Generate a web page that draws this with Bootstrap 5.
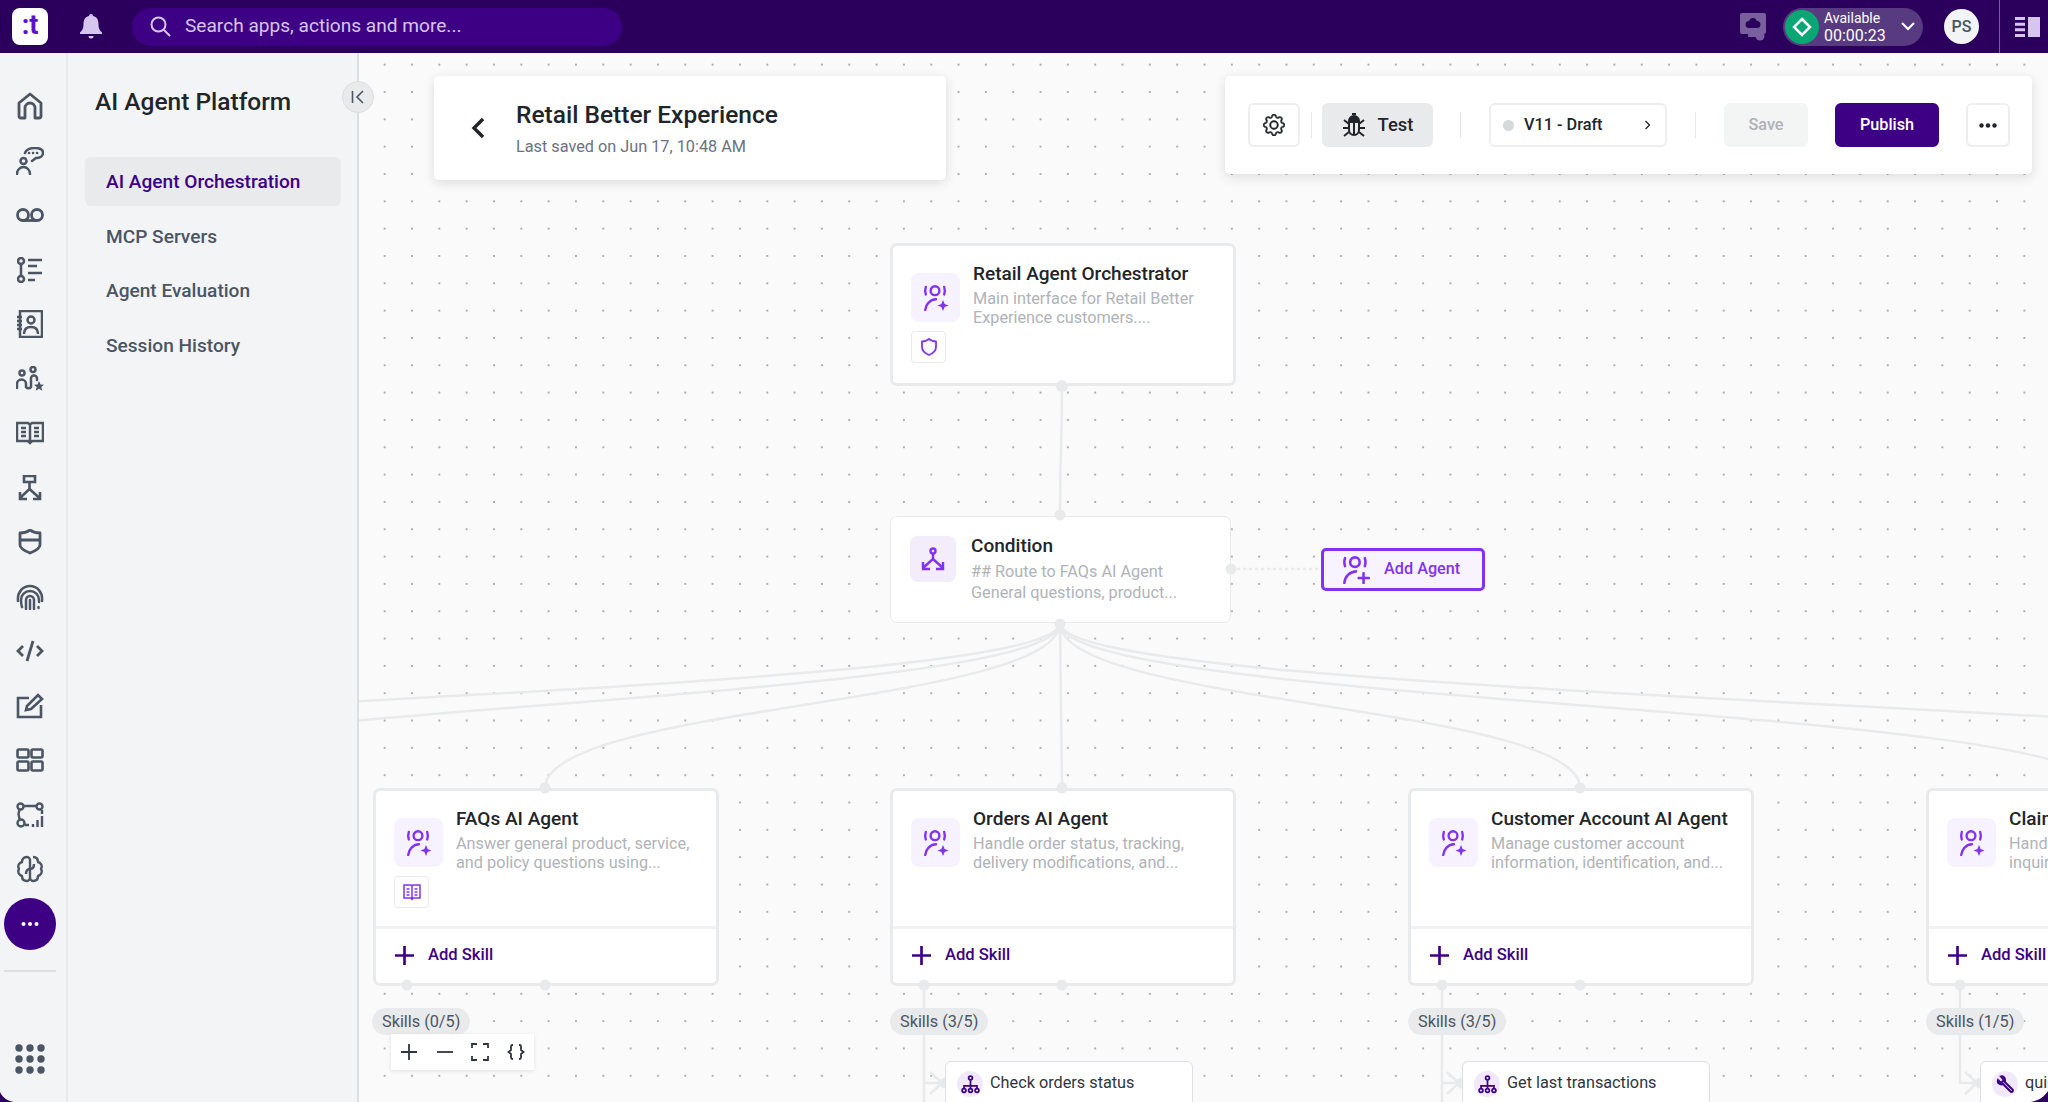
<!DOCTYPE html>
<html lang="en">
<head>
  <meta charset="UTF-8">
  <title>AI Agent Platform</title>
  <link href="https://cdn.jsdelivr.net/npm/bootstrap@5.3.0/dist/css/bootstrap.min.css" rel="stylesheet">
  <style>
    body { font-family: Roboto, "Liberation Sans", sans-serif; background: #fafafa; color: #212529; }
    .app-shell { height: 1102px; width: 2048px; position: relative; }

    /* top bar */
    .app-top { height: 53px; background: #2b005c; flex: none; padding-left: 12px; }
    .app-logo { width: 36px; height: 37px; background: #fff; border-radius: 8px; color: #5a10cc; font: 700 27px/35px Roboto, sans-serif; text-align: center; }
    .app-bell { margin-left: 32px; color: #d6c6ee; }
    .app-search { margin-left: 30px; width: 490px; height: 38px; background: #3d0085; border-radius: 19px; color: #d6c6ee; font-size: 19.1px; padding-left: 18px; gap: 14px; }
    .app-monitor { margin-left: auto; margin-right: 16px; color: #7a5f9e; }
    .app-status { width: 140px; height: 38px; border-radius: 19px; background: #583a80; color: #fff; padding-left: 2px; }
    .app-status-dot { width: 34px; height: 34px; border-radius: 50%; background: #0aa774; }
    .app-status-text { margin-left: 5px; line-height: 17px; }
    .app-status-label { font-size: 14px; }
    .app-status-time { font-size: 16px; }
    .app-avatar { width: 35px; height: 35px; border-radius: 50%; background: #f3f4f6; color: #4b5563; font-size: 16px; font-weight: 500; margin-left: 21px; }
    .app-topline { width: 1px; height: 53px; background: #7a5f9e; margin-left: 20px; }
    .app-panelbtn { margin-left: 15px; margin-right: 8px; }

    /* left rail and panel */
    .app-rail { width: 68px; flex: none; background: #f3f4f6; border-right: 2px solid #e9eaec; color: #4b5563; padding: 26px 6px 0 0; }
    .rail-item { height: 54.5px; width: 100%; flex: none; }
    .rail-more { width: 52px; height: 52px; border-radius: 50%; background: #3d0085; margin-top: 1px; flex: none; }
    .rail-rule { width: 52px; height: 2px; background: #dcdee1; margin-top: 20px; flex: none; }
    .rail-apps { margin-top: 72px; flex: none; }
    .app-panel { width: 291px; flex: none; background: #f3f4f6; border-right: 2px solid #dcdee1; padding: 33px 16px 0 17px; position: relative; }
    .panel-title { font-size: 24.5px; font-weight: 500; line-height: 32px; margin: 0 0 39px 10px; white-space: nowrap; }
    .panel-link { display: block; height: 49px; line-height: 49px; margin-bottom: 5.5px; padding-left: 21px; border-radius: 6px; font-size: 19.1px; font-weight: 500; color: #4b5563; text-decoration: none; }
    .panel-link.is-on { background: #e9eaec; color: #3d0085; }
    .panel-toggle { position: absolute; right: -17px; top: 28px; width: 32px; height: 32px; border-radius: 50%; background: #e9eaec; border: 1px solid #dcdee1; color: #4b5563; z-index: 5; }

    /* canvas */
    .app-canvas { flex: 1; background-color: #fafafa; background-image: radial-gradient(circle, #555 .5px, transparent .85px); background-size: 27.33px 27.33px; background-position: 12px -2px; }
    .flow-layer { position: absolute; left: -359px; top: -53px; width: 2700px; height: 1200px; }
    .flow-edges { position: absolute; left: 0; top: 0; }
    .flow-edge { fill: none; stroke: #e9eaec; stroke-width: 2.5; }
    .flow-grip { fill: #e9eaec; }

    .flow-card { position: absolute; background: #fff; border: 3px solid #e9eaec; border-radius: 7px; width: 346px; }
    .card-top { top: 243px; left: 890px; height: 143px; }
    .card-cond { top: 516px; left: 890px; width: 341px; height: 107px; border-width: 1px; }
    .card-faq { left: 373px; }
    .card-orders { left: 890px; }
    .card-account { left: 1408px; }
    .card-claims { left: 1926px; }
    .card-agent { top: 788px; height: 198px; }
    .card-body-row { height: 138px; padding: 27px 18px 0; gap: 13px; border-bottom: 3px solid #f1f2f3; }
    .card-top .card-body-row { border: 0; }
    .card-cond .card-body-row { border: 0; padding: 19px 19px 0; gap: 15px; height: auto; }
    .agent-tile { width: 49px; height: 49px; border-radius: 8px; background: #f6f2ff; color: #8133f1; flex: none; }
    .cond-tile { width: 46px; height: 46px; border-radius: 8px; background: #f2ecfb; color: #8133f1; flex: none; }
    .agent-badge { width: 35px; height: 32px; margin-top: 9px; border: 1px solid #e9eaec; border-radius: 4px; color: #8133f1; }
    .agent-name { font-size: 19.05px; font-weight: 500; line-height: 22px; margin-top: -10px; white-space: nowrap; }
    .agent-note { font-size: 16.25px; line-height: 19px; color: #b0b3b8; margin-top: 4px; white-space: nowrap; }
    .card-cond .agent-name { margin-top: -1px; }
    .card-cond .agent-note { line-height: 21px; margin-top: 4px; }
    .add-skill { height: 53px; padding-left: 19px; gap: 14px; color: #3d0085; font-size: 16.6px; font-weight: 500; }

    .add-agent { position: absolute; left: 1321px; top: 548px; width: 164px; height: 43px; background: #f8f4ff; border: 3px solid #8133f1; border-radius: 5px; color: #8133f1; font-size: 16.25px; font-weight: 500; padding-left: 18px; gap: 14px; }
    .skill-pill { position: absolute; top: 1008px; height: 27px; line-height: 27px; padding: 0 10px; background: #e9eaec; border-radius: 14px; color: #4b5563; font-size: 16.25px; white-space: nowrap; }
    .pill-faq { left: 372px; }
    .pill-orders { left: 890px; }
    .pill-account { left: 1408px; }
    .pill-claims { left: 1926px; }
    .skill-box { position: absolute; top: 1061px; height: 60px; width: 248px; background: #fff; border: 1px solid #dcdfe3; border-radius: 6px; padding: 9px 11px; gap: 7px; font-size: 16.25px; color: #2f3540; white-space: nowrap; }
    .box-orders { left: 945px; }
    .box-account { left: 1462px; }
    .box-claims { left: 1980px; }
    .skill-icon { width: 26px; height: 26px; border-radius: 50%; background: #f1e9fb; color: #3d0085; flex: none; }
    .zoom-bar { position: absolute; left: 391px; top: 1034px; width: 143px; height: 36px; background: #fff; box-shadow: 0 1px 4px rgba(0,0,0,.1); color: #2f3540; z-index: 4; padding: 0 8px; justify-content: space-between; }

    /* floating header cards */
    .float-card { position: absolute; top: 76px; background: #fff; border-radius: 5px; box-shadow: 0 3px 12px rgba(0,0,0,.12); z-index: 6; }
    .head-card { left: 434px; width: 512px; height: 104px; }
    .head-back { margin-left: 37px; margin-right: 31px; color: #212529; }
    .head-title { font-size: 24.5px; font-weight: 500; line-height: 30px; }
    .head-sub { font-size: 16.25px; line-height: 20px; color: #6b7280; margin-top: 7px; }
    .tool-card { left: 1225px; width: 807px; height: 98px; padding-left: 23px; }
    .tool-btn { height: 44px; border: 2px solid #eceef0; border-radius: 6px; background: #fff; font-size: 16.25px; font-weight: 500; color: #212529; flex: none; }
    .tool-gear { width: 52px; }
    .tool-test { width: 111px; background: #e9eaec; border-color: #e9eaec; font-size: 18.4px; gap: 12px; }
    .tool-version { width: 178px; padding: 0 14px 0 12px; }
    .tool-dot { width: 11px; height: 11px; border-radius: 50%; background: #d5d8dc; margin-right: 10px; }
    .tool-save { width: 84px; background: #f3f4f4; border-color: #f3f4f4; color: #aeb1b6; }
    .tool-publish { width: 104px; background: #3d0085; border-color: #3d0085; color: #fff; }
    .tool-more { width: 44px; }
    .tool-rule { width: 1px; height: 26px; background: #e6e7e9; flex: none; }
    .gap-a { margin: 0 10px 0 11px; }
    .gap-b { margin: 0 28px 0 27px; }
    .gap-b2 { margin: 0 28px; }
    .gap-c { margin-left: 27px; }
    .gap-d { margin-left: 27px; }

    .win-corner { position: absolute; bottom: 0; z-index: 9; }
    .corner-left { left: 0; }
    .corner-right { right: 0; }
    .sprite { position: absolute; width: 0; height: 0; }
  </style>
</head>
<body>

<svg class="sprite" aria-hidden="true">
  <symbol id="ic-agent" viewBox="0 0 26 26" fill="none" stroke="currentColor" stroke-width="2.4" stroke-linecap="round">
    <circle cx="12" cy="5.7" r="4.4"/>
    <path d="M2.8 2Q1.6 5.7 2.8 9.4M21.2 2Q22.4 5.7 21.2 9.4"/>
    <path d="M2.2 25C2.7 19 7 14.7 13 14.3"/>
    <path d="M20 15l1.6 3.9 3.9 1.6-3.9 1.6-1.6 3.9-1.6-3.9-3.9-1.6 3.9-1.6z" fill="currentColor" stroke="none"/>
  </symbol>
  <symbol id="ic-plus" viewBox="0 0 20 20" fill="none" stroke="currentColor" stroke-width="2.8">
    <path d="M10 0v20M0 10h20"/>
  </symbol>
  <symbol id="ic-tree" viewBox="0 0 22 22" fill="none" stroke="currentColor" stroke-width="2">
    <circle cx="11" cy="3.5" r="2.2"/>
    <circle cx="3.5" cy="18" r="2.2"/>
    <circle cx="11" cy="18" r="2.2"/>
    <circle cx="18.5" cy="18" r="2.2"/>
    <path d="M11 6v10M3.5 16v-3.5h15V16"/>
  </symbol>
</svg>

<div class="app-shell d-flex flex-column overflow-hidden">

  <header class="app-top d-flex align-items-center">
    <div class="app-logo">:t</div>
    <svg class="app-bell" width="22" height="25" viewBox="0 0 22 25" fill="currentColor"><path d="M11 0a2 2 0 0 1 2 2c4 .9 5.5 4 5.5 8 0 4.5 1.3 6.5 3.5 8.5V20H0v-1.5C2.2 16.5 3.5 14.5 3.5 10c0-4 1.5-7.100 5.500-8a2 2 0 0 1 2-2z"/><path d="M8.5 22h5a2.5 2.5 0 0 1-5 0z"/></svg>
    <div class="app-search d-flex align-items-center">
      <svg width="21" height="21" viewBox="0 0 21 21" fill="none" stroke="currentColor" stroke-width="2"><circle cx="8.5" cy="8.5" r="7"/><path d="M13.5 13.5L20 20"/></svg>
      <span>Search apps, actions and more...</span>
    </div>
    <svg class="app-monitor" width="28" height="28" viewBox="0 0 28 28" fill="currentColor"><path d="M3 0h22a2 2 0 0 1 2 2v17a2 2 0 0 1-2 2h-2.500a5 5 0 0 0-5 0H3a2 2 0 0 1-2-2V2a2 2 0 0 1 2-2z"/><path d="M9 21h8v3H9z"/><circle cx="21" cy="23" r="4.5"/><path d="M14 5a4 4 0 0 1 3.800 3A3.500 3.500 0 0 1 18 15H10a3.500 3.500 0 0 1 .2-7A4 4 0 0 1 14 5z" fill="#2b005c"/></svg>
    <div class="app-status d-flex align-items-center">
      <div class="app-status-dot d-flex align-items-center justify-content-center">
        <svg width="20" height="20" viewBox="0 0 20 20" fill="none" stroke="#fff" stroke-width="2.5"><path d="M10 2l8 8-8 8-8-8z"/></svg>
      </div>
      <div class="app-status-text">
        <div class="app-status-label">Available</div>
        <div class="app-status-time">00:00:23</div>
      </div>
      <svg class="ms-auto me-2" width="14" height="9" viewBox="0 0 14 9" fill="none" stroke="#fff" stroke-width="2"><path d="M1 1l6 6 6-6"/></svg>
    </div>
    <div class="app-avatar d-flex align-items-center justify-content-center">PS</div>
    <div class="app-topline"></div>
    <svg class="app-panelbtn" width="25" height="20" viewBox="0 0 25 20" fill="#d6c6ee"><path d="M0 0h10v3H0zM0 5.7h10v3H0zM0 11.3h10v3H0zM0 17h10v3H0zM13 0h12v20H13z"/></svg>
  </header>

  <div class="d-flex flex-grow-1 overflow-hidden">
    <nav class="app-rail d-flex flex-column align-items-center">
      <!-- home -->
      <div class="rail-item d-flex align-items-center justify-content-center"><svg width="26" height="28" viewBox="0 0 26 28" fill="none" stroke="currentColor" stroke-width="2.8" stroke-linejoin="round"><path d="M13 2L2 11v13a2 2 0 0 0 2 2h4V16a5 5 0 0 1 10 0v10h4a2 2 0 0 0 2-2V11z"/></svg></div>
      <!-- agent chat -->
      <div class="rail-item d-flex align-items-center justify-content-center"><svg width="28" height="28" viewBox="0 0 28 28" fill="none" stroke="currentColor" stroke-width="2.5" stroke-linecap="round"><circle cx="7.5" cy="14" r="3"/><path d="M1 27c0-4 3-7 6.500-7s6.500 3 6.500 7"/><path d="M9 6c1-3 5-5 10-5 5 0 8 2 8 5s-3 5-7 5l-4 3"/><path d="M13 6h.1M17 6h.1M21 6h.1"/></svg></div>
      <!-- voicemail -->
      <div class="rail-item d-flex align-items-center justify-content-center"><svg width="28" height="16" viewBox="0 0 28 16" fill="none" stroke="currentColor" stroke-width="2.8"><circle cx="7" cy="8" r="5.5"/><circle cx="21" cy="8" r="5.5"/><path d="M7 13.5h14"/></svg></div>
      <!-- steps -->
      <div class="rail-item d-flex align-items-center justify-content-center"><svg width="26" height="26" viewBox="0 0 26 26" fill="none" stroke="currentColor" stroke-width="2.5"><circle cx="4" cy="4" r="3"/><circle cx="4" cy="22" r="3"/><path d="M4 7v12M11 3h14M11 9h9M11 16h14M11 23h7"/></svg></div>
      <!-- contacts -->
      <div class="rail-item d-flex align-items-center justify-content-center"><svg width="26" height="28" viewBox="0 0 26 28" fill="none" stroke="currentColor" stroke-width="2.5"><path d="M3 1h22v26H3z"/><path d="M0 7h5M0 11h5M0 15h5M0 19h5"/><circle cx="14" cy="10" r="3.5"/><path d="M7 24c0-5 3-7 7-7s7 2 7 7"/></svg></div>
      <!-- people star -->
      <div class="rail-item d-flex align-items-center justify-content-center"><svg width="28" height="26" viewBox="0 0 28 26" fill="none" stroke="currentColor" stroke-width="2.5" stroke-linecap="round"><circle cx="6" cy="7" r="2.5"/><circle cx="17" cy="3.5" r="2.5"/><path d="M1 22v-4a4.500 4.500 0 0 1 9 0v3a3 3 0 0 0 5 0V13a3 3 0 0 1 6-1v2"/><path d="M23 15l1.500 3.500 3.500.3-2.700 2.300.9 3.600-3.200-2-3.200 2 .9-3.600-2.700-2.300 3.500-.3z" fill="currentColor" stroke="none"/></svg></div>
      <!-- book -->
      <div class="rail-item d-flex align-items-center justify-content-center"><svg width="28" height="24" viewBox="0 0 28 24" fill="none" stroke="currentColor" stroke-width="2.5"><path d="M1 2h11l2 1.500L16 2h11v18H16l-2 2-2-2H1zM14 3.500V20"/><path d="M5 7h5M5 11h5M5 15h5M18 7h5M18 11h5M18 15h5"/></svg></div>
      <!-- flow -->
      <div class="rail-item d-flex align-items-center justify-content-center"><svg width="26" height="26" viewBox="0 0 26 26" fill="none" stroke="currentColor" stroke-width="2.6"><path d="M7 1h11v6H7zM12.500 7v7L3 23M12.500 14l10 9M3 17v7h7M23 17v7h-7"/></svg></div>
      <!-- shield -->
      <div class="rail-item d-flex align-items-center justify-content-center"><svg width="24" height="26" viewBox="0 0 24 26" fill="none" stroke="currentColor" stroke-width="2.8" stroke-linejoin="round"><path d="M2 4c4 0 7-1 10-3 3 2 6 3 10 3v12c0 3-5 6-10 8-5-2-10-5-10-8zM2 11h20"/></svg></div>
      <!-- fingerprint -->
      <div class="rail-item d-flex align-items-center justify-content-center"><svg width="28" height="26" viewBox="0 0 28 26" fill="none" stroke="currentColor" stroke-width="2.5" stroke-linecap="round"><path d="M2 17C1 8 7 2 14 2s13 6 12 15M6 23c-1-3-1-5-1-7 0-5 4-9 9-9s9 4 9 9v2M10 25v-9a4 4 0 0 1 8 0v9M14 16v9M22.500 23v1"/></svg></div>
      <!-- code -->
      <div class="rail-item d-flex align-items-center justify-content-center"><svg width="28" height="22" viewBox="0 0 28 22" fill="none" stroke="currentColor" stroke-width="2.8"><path d="M7 6l-5 5 5 5M21 6l5 5-5 5M17 1l-6 20"/></svg></div>
      <!-- edit -->
      <div class="rail-item d-flex align-items-center justify-content-center"><svg width="28" height="26" viewBox="0 0 28 26" fill="none" stroke="currentColor" stroke-width="2.6"><path d="M13 5H2v19h23V12"/><path d="M10 17l1-4L22 2l4 4-11 10z"/></svg></div>
      <!-- grid -->
      <div class="rail-item d-flex align-items-center justify-content-center"><svg width="28" height="24" viewBox="0 0 28 24" fill="none" stroke="currentColor" stroke-width="2.6"><rect x="1.5" y="1.5" width="11" height="8" rx="1.5"/><rect x="15.5" y="1.5" width="11" height="8" rx="1.5"/><rect x="1.5" y="13.5" width="11" height="9" rx="1.5"/><rect x="15.5" y="13.5" width="11" height="9" rx="1.5"/></svg></div>
      <!-- analytics -->
      <div class="rail-item d-flex align-items-center justify-content-center"><svg width="28" height="26" viewBox="0 0 28 26" fill="none" stroke="currentColor" stroke-width="2.4"><circle cx="4.5" cy="4.5" r="3"/><circle cx="23.5" cy="4.5" r="3"/><circle cx="5" cy="21" r="3.5"/><path d="M7.500 4h13M3.500 7.500L2.500 12l1 5M26 8v4M9 23h4"/><path d="M17 22v3M21.500 18v7M26 14v11"/></svg></div>
      <!-- brain -->
      <div class="rail-item d-flex align-items-center justify-content-center"><svg width="28" height="28" viewBox="0 0 28 28" fill="none" stroke="currentColor" stroke-width="2.4" stroke-linejoin="round"><path d="M11 2C7 2 6 5 6 7c-3 1-5 4-3 7-2 3 0 6 3 7 0 3 2 5 5 5 2 0 3-2 3-3V5c0-1-1-3-3-3z"/><path d="M17 2c4 0 5 3 5 5 3 1 5 4 3 7 2 3 0 6-3 7 0 3-2 5-5 5-2 0-3-2-3-3"/><path d="M14 14c3 0 4-2 4-5M14 14c-3 0-4 2-4 5"/></svg></div>
      <div class="rail-more d-flex align-items-center justify-content-center"><svg width="18" height="4" viewBox="0 0 18 4" fill="#fff"><circle cx="2.5" cy="2" r="2"/><circle cx="9" cy="2" r="2"/><circle cx="15.5" cy="2" r="2"/></svg></div>
      <div class="rail-rule"></div>
      <svg class="rail-apps" width="30" height="30" viewBox="0 0 30 30" fill="#4b5563"><circle cx="4" cy="4" r="3.7"/><circle cx="15" cy="4" r="3.7"/><circle cx="26" cy="4" r="3.7"/><circle cx="4" cy="15" r="3.7"/><circle cx="15" cy="15" r="3.7"/><circle cx="26" cy="15" r="3.7"/><circle cx="4" cy="26" r="3.7"/><circle cx="15" cy="26" r="3.7"/><circle cx="26" cy="26" r="3.7"/></svg>
    </nav>

    <aside class="app-panel">
      <div class="panel-title">AI Agent Platform</div>
      <a class="panel-link is-on" href="#">AI Agent Orchestration</a>
      <a class="panel-link" href="#">MCP Servers</a>
      <a class="panel-link" href="#">Agent Evaluation</a>
      <a class="panel-link" href="#">Session History</a>
      <div class="panel-toggle d-flex align-items-center justify-content-center">
        <svg width="14" height="14" viewBox="0 0 14 14" fill="none" stroke="currentColor" stroke-width="1.6"><path d="M1.5 1v12M12 1L6 7l6 6"/></svg>
      </div>
    </aside>

    <main class="app-canvas position-relative overflow-hidden">
      <div class="flow-layer">

        <svg class="flow-edges" width="2700" height="1200">
          <path class="flow-edge" d="M1062 386C1062 450 1060 450 1060 516"/>
          <path class="flow-edge" stroke-dasharray="3 3" d="M1231 569H1321"/>
          <path class="flow-edge" d="M1060 623C1060 705 -491 705 -491 788"/>
          <path class="flow-edge" d="M1060 623C1060 705 27 705 27 788"/>
          <path class="flow-edge" d="M1060 623C1060 705 545 705 545 788"/>
          <path class="flow-edge" d="M1060 623L1062 788"/>
          <path class="flow-edge" d="M1060 623C1060 705 1580 705 1580 788"/>
          <path class="flow-edge" d="M1060 623C1060 705 2098 705 2098 788"/>
          <path class="flow-edge" d="M1060 623C1060 705 2617 705 2617 788"/>
          <path class="flow-edge" d="M924 986V1102M924 1083H942M930 1072L942 1083L930 1094"/>
          <path class="flow-edge" d="M1442 986V1102M1442 1083H1459M1447 1072L1459 1083L1447 1094"/>
          <path class="flow-edge" d="M1960 986V1083H1977M1965 1072L1977 1083L1965 1094"/>
        </svg>

        <div class="flow-card card-top">
          <div class="card-body-row d-flex">
            <div>
              <div class="agent-tile d-flex align-items-center justify-content-center"><svg width="26" height="26"><use href="#ic-agent"/></svg></div>
              <div class="agent-badge d-flex align-items-center justify-content-center"><svg width="16" height="18" viewBox="0 0 16 18" fill="none" stroke="currentColor" stroke-width="1.8" stroke-linejoin="round"><path d="M1 3.5C4 3.5 6 2.5 8 1c2 1.5 4 2.5 7 2.5V9c0 4-3.5 6.5-7 8-3.500-1.500-7-4-7-8z"/></svg></div>
            </div>
            <div>
              <div class="agent-name">Retail Agent Orchestrator</div>
              <div class="agent-note">Main interface for Retail Better<br>Experience customers....</div>
            </div>
          </div>
        </div>

        <div class="flow-card card-cond">
          <div class="card-body-row d-flex">
            <div class="cond-tile d-flex align-items-center justify-content-center">
              <svg width="24" height="24" viewBox="0 0 24 24" fill="none" stroke="currentColor" stroke-width="2.4"><circle cx="12" cy="4" r="2.5"/><path d="M12 7v5L2 21M12 12l10 9M2 15v7h7M22 15v7h-7"/></svg>
            </div>
            <div>
              <div class="agent-name">Condition</div>
              <div class="agent-note">## Route to FAQs AI Agent<br>General questions, product...</div>
            </div>
          </div>
        </div>

        <div class="add-agent d-flex align-items-center">
          <svg width="28" height="28" viewBox="0 0 26 26" fill="none" stroke="currentColor" stroke-width="2.4" stroke-linecap="round"><circle cx="12" cy="5.7" r="4.4"/><path d="M2.8 2Q1.6 5.7 2.8 9.4M21.2 2Q22.4 5.7 21.2 9.4M2.2 25C2.7 19 7 14.7 13 14.3M20 16v9M15.5 20.5h9.5"/></svg>
          <span>Add Agent</span>
        </div>

        <div class="flow-card card-agent card-faq">
          <div class="card-body-row d-flex">
            <div>
              <div class="agent-tile d-flex align-items-center justify-content-center"><svg width="26" height="26"><use href="#ic-agent"/></svg></div>
              <div class="agent-badge d-flex align-items-center justify-content-center"><svg width="18" height="18" viewBox="0 0 18 18" fill="none" stroke="currentColor" stroke-width="1.5"><path d="M1 2h7l1 1 1-1h7v13h-7l-1 1.5L8 15H1zM9 3v12M3.5 6h3M3.5 9h3M3.5 12h3M11.5 6h3M11.5 9h3M11.5 12h3"/></svg></div>
            </div>
            <div>
              <div class="agent-name">FAQs AI Agent</div>
              <div class="agent-note">Answer general product, service,<br>and policy questions using...</div>
            </div>
          </div>
          <div class="add-skill d-flex align-items-center"><svg width="19" height="19"><use href="#ic-plus"/></svg><span>Add Skill</span></div>
        </div>

        <div class="flow-card card-agent card-orders">
          <div class="card-body-row d-flex">
            <div class="agent-tile d-flex align-items-center justify-content-center"><svg width="26" height="26"><use href="#ic-agent"/></svg></div>
            <div>
              <div class="agent-name">Orders AI Agent</div>
              <div class="agent-note">Handle order status, tracking,<br>delivery modifications, and...</div>
            </div>
          </div>
          <div class="add-skill d-flex align-items-center"><svg width="19" height="19"><use href="#ic-plus"/></svg><span>Add Skill</span></div>
        </div>

        <div class="flow-card card-agent card-account">
          <div class="card-body-row d-flex">
            <div class="agent-tile d-flex align-items-center justify-content-center"><svg width="26" height="26"><use href="#ic-agent"/></svg></div>
            <div>
              <div class="agent-name">Customer Account AI Agent</div>
              <div class="agent-note">Manage customer account<br>information, identification, and...</div>
            </div>
          </div>
          <div class="add-skill d-flex align-items-center"><svg width="19" height="19"><use href="#ic-plus"/></svg><span>Add Skill</span></div>
        </div>

        <div class="flow-card card-agent card-claims">
          <div class="card-body-row d-flex">
            <div class="agent-tile d-flex align-items-center justify-content-center"><svg width="26" height="26"><use href="#ic-agent"/></svg></div>
            <div>
              <div class="agent-name">Claims AI Agent</div>
              <div class="agent-note">Handle claims and return<br>inquiries, refunds, and...</div>
            </div>
          </div>
          <div class="add-skill d-flex align-items-center"><svg width="19" height="19"><use href="#ic-plus"/></svg><span>Add Skill</span></div>
        </div>

        <svg class="flow-edges" width="2700" height="1200">
          <circle class="flow-grip" cx="1062" cy="386" r="6"/>
          <circle class="flow-grip" cx="1060" cy="515" r="5.5"/>
          <circle class="flow-grip" cx="1231" cy="569" r="5.5"/>
          <circle class="flow-grip" cx="1060" cy="624" r="5.5"/>
          <circle class="flow-grip" cx="545" cy="788" r="5.5"/>
          <circle class="flow-grip" cx="1062" cy="788" r="5.5"/>
          <circle class="flow-grip" cx="1580" cy="788" r="5.5"/>
          <circle class="flow-grip" cx="407" cy="985" r="5.5"/>
          <circle class="flow-grip" cx="545" cy="985" r="5.5"/>
          <circle class="flow-grip" cx="924" cy="985" r="5.5"/>
          <circle class="flow-grip" cx="1062" cy="985" r="5.5"/>
          <circle class="flow-grip" cx="1442" cy="985" r="5.5"/>
          <circle class="flow-grip" cx="1580" cy="985" r="5.5"/>
          <circle class="flow-grip" cx="1960" cy="985" r="5.5"/>
          <circle class="flow-grip" cx="945" cy="1083" r="5.5"/>
          <circle class="flow-grip" cx="1462" cy="1083" r="5.5"/>
          <circle class="flow-grip" cx="1980" cy="1083" r="5.5"/>
        </svg>

        <div class="skill-pill pill-faq">Skills (0/5)</div>
        <div class="skill-pill pill-orders">Skills (3/5)</div>
        <div class="skill-pill pill-account">Skills (3/5)</div>
        <div class="skill-pill pill-claims">Skills (1/5)</div>

        <div class="skill-box box-orders d-flex">
          <div class="skill-icon d-flex align-items-center justify-content-center"><svg width="19" height="19"><use href="#ic-tree"/></svg></div>
          <span>Check orders status</span>
        </div>
        <div class="skill-box box-account d-flex">
          <div class="skill-icon d-flex align-items-center justify-content-center"><svg width="19" height="19"><use href="#ic-tree"/></svg></div>
          <span>Get last transactions</span>
        </div>
        <div class="skill-box box-claims d-flex">
          <div class="skill-icon d-flex align-items-center justify-content-center">
            <svg width="18" height="18" viewBox="0 0 18 18" fill="none" stroke="currentColor" stroke-width="2"><path d="M2 5l3 3 3-3-3-3.500C7 1 9 2 9 5c0 1 0 1.500-.2 2L16.500 14.500a1.400 1.400 0 0 1-2 2L7 9c-3 1.200-6-1-5-4z"/></svg>
          </div>
          <span>quick claim status</span>
        </div>

        <div class="zoom-bar d-flex align-items-center">
          <svg width="20" height="20" viewBox="0 0 20 20" fill="none" stroke="currentColor" stroke-width="1.8"><path d="M10 2v16M2 10h16"/></svg>
          <svg width="20" height="20" viewBox="0 0 20 20" fill="none" stroke="currentColor" stroke-width="1.8"><path d="M2 10h16"/></svg>
          <svg width="20" height="20" viewBox="0 0 20 20" fill="none" stroke="currentColor" stroke-width="1.8"><path d="M2 6V2h5M13 2h5v4M18 14v4h-5M7 18H2v-4"/></svg>
          <svg width="20" height="20" viewBox="0 0 20 20" fill="none" stroke="currentColor" stroke-width="1.8"><path d="M7 3H6.500A1.500 1.500 0 0 0 5 4.500V8l-2.500 2L5 12v3.500A1.500 1.500 0 0 0 6.500 17H7M13 3h.5A1.500 1.500 0 0 1 15 4.500V8l2.500 2-2.500 2v3.500a1.500 1.500 0 0 1-1.500 1.500H13"/></svg>
        </div>

        <div class="float-card head-card d-flex align-items-center">
          <svg class="head-back" width="14" height="22" viewBox="0 0 14 22" fill="none" stroke="currentColor" stroke-width="3.4"><path d="M12 2L3 11l9 9"/></svg>
          <div>
            <div class="head-title">Retail Better Experience</div>
            <div class="head-sub">Last saved on Jun 17, 10:48 AM</div>
          </div>
        </div>

        <div class="float-card tool-card d-flex align-items-center">
          <div class="tool-btn tool-gear d-flex align-items-center justify-content-center">
            <svg width="22" height="22" viewBox="0 0 16 16" fill="currentColor" stroke="currentColor" stroke-width=".35"><path d="M8 4.754a3.246 3.246 0 1 0 0 6.492 3.246 3.246 0 0 0 0-6.492zM5.754 8a2.246 2.246 0 1 1 4.492 0 2.246 2.246 0 0 1-4.492 0z"/><path d="M9.796 1.343c-.527-1.790-3.065-1.790-3.592 0l-.094.319a.873.873 0 0 1-1.255.52l-.292-.16c-1.640-.892-3.433.902-2.540 2.541l.159.292a.873.873 0 0 1-.52 1.255l-.319.094c-1.790.527-1.790 3.065 0 3.592l.319.094a.873.873 0 0 1 .52 1.255l-.16.292c-.892 1.640.901 3.434 2.541 2.540l.292-.159a.873.873 0 0 1 1.255.52l.094.319c.527 1.790 3.065 1.790 3.592 0l.094-.319a.873.873 0 0 1 1.255-.52l.292.16c1.640.893 3.434-.902 2.540-2.541l-.159-.292a.873.873 0 0 1 .52-1.255l.319-.094c1.790-.527 1.790-3.065 0-3.592l-.319-.094a.873.873 0 0 1-.52-1.255l.16-.292c.893-1.640-.902-3.433-2.541-2.540l-.292.159a.873.873 0 0 1-1.255-.52l-.094-.319zm-2.633.283c.246-.835 1.428-.835 1.674 0l.094.319a1.873 1.873 0 0 0 2.693 1.115l.291-.16c.764-.415 1.600.42 1.184 1.185l-.159.292a1.873 1.873 0 0 0 1.116 2.692l.318.094c.835.246.835 1.428 0 1.674l-.319.094a1.873 1.873 0 0 0-1.115 2.693l.16.291c.415.764-.42 1.600-1.185 1.184l-.291-.159a1.873 1.873 0 0 0-2.693 1.116l-.094.318c-.246.835-1.428.835-1.674 0l-.094-.319a1.873 1.873 0 0 0-2.692-1.115l-.292.16c-.764.415-1.600-.42-1.184-1.185l.159-.291A1.873 1.873 0 0 0 1.945 8.930l-.319-.094c-.835-.246-.835-1.428 0-1.674l.319-.094A1.873 1.873 0 0 0 3.060 4.377l-.16-.292c-.415-.764.42-1.600 1.185-1.184l.292.159a1.873 1.873 0 0 0 2.692-1.115l.094-.319z"/></svg>
          </div>
          <div class="tool-rule gap-a"></div>
          <div class="tool-btn tool-test d-flex align-items-center justify-content-center">
            <svg width="24" height="26" viewBox="0 0 24 26" fill="none" stroke="currentColor" stroke-width="2"><path d="M7 10h10v8a5 5 0 0 1-10 0zM12 10v13M2 8l5 4M22 8l-5 4M1 16h6M23 16h-6M2 24l5-4M22 24l-5-4"/><path d="M7 9a5 5 0 0 1 10 0zM10 2h4" fill="currentColor"/></svg>
            <span>Test</span>
          </div>
          <div class="tool-rule gap-b"></div>
          <div class="tool-btn tool-version d-flex align-items-center">
            <span class="tool-dot"></span>
            <span>V11 - Draft</span>
            <svg class="ms-auto" width="7" height="10" viewBox="0 0 7 10" fill="none" stroke="currentColor" stroke-width="1.3"><path d="M1.5 1l4 4-4 4"/></svg>
          </div>
          <div class="tool-rule gap-b2"></div>
          <div class="tool-btn tool-save d-flex align-items-center justify-content-center">Save</div>
          <div class="tool-btn tool-publish gap-c d-flex align-items-center justify-content-center">Publish</div>
          <div class="tool-btn tool-more gap-d d-flex align-items-center justify-content-center">
            <svg width="18" height="5" viewBox="0 0 18 5" fill="#212529"><circle cx="2.5" cy="2.5" r="2.2"/><circle cx="9" cy="2.5" r="2.2"/><circle cx="15.5" cy="2.5" r="2.2"/></svg>
          </div>
        </div>

      </div>
    </main>
  </div>

  <svg class="win-corner corner-left" width="14" height="10" viewBox="0 0 14 10" fill="#2b005c"><path d="M0 0C2 5 7 9 14 10H0z"/></svg>
  <svg class="win-corner corner-right" width="18" height="11" viewBox="0 0 18 11" fill="#2b005c"><path d="M18 0C14 6 8 10 0 11H18z"/></svg>
</div>

<script src="https://cdn.jsdelivr.net/npm/bootstrap@5.3.0/dist/js/bootstrap.bundle.min.js"></script>
</body>
</html>
